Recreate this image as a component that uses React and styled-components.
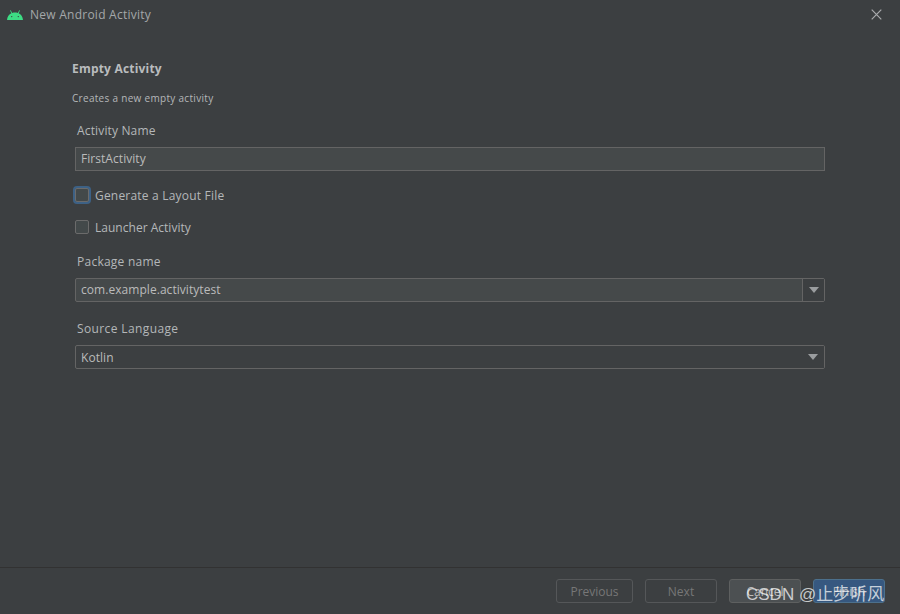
import React from 'react'
import styled, { createGlobalStyle } from 'styled-components'

const Global = createGlobalStyle`
html, body { margin: 0; padding: 0; background: #3c3f41; }
* { box-sizing: border-box; }
`

const Window = styled.div`
position: relative;
width: 900px;
height: 614px;
display: flex;
flex-direction: column;
background: #3c3f41;
color: #bbbbbb;
font-family: "Open Sans", "Noto Sans", "Liberation Sans", sans-serif;
font-size: 12px;
overflow: hidden;
`

const TitleBar = styled.div`
height: 29px;
flex: none;
display: flex;
align-items: center;
padding: 0 18px 0 7px;
gap: 7px;
`

const TitleText = styled.span`
flex: 1;
color: #a4a7a9;
font-size: 12px;
letter-spacing: .25px;
`

const Content = styled.div`
flex: 1;
display: flex;
flex-direction: column;
padding: 31px 75px 0 75px;
`

const Heading = styled.div`
margin-left: -3px;
height: 18px;
line-height: 18px;
font-weight: 700;
font-size: 12px;
letter-spacing: .2px;
color: #b9bcbe;
`

const Description = styled.div`
margin: 12px 0 0 -3px;
height: 16px;
line-height: 16px;
font-size: 10px;
letter-spacing: .3px;
color: #b4b7b9;
`

const Label = styled.div`
margin: ${p => p.$top}px 0 0 2px;
height: 18px;
line-height: 18px;
letter-spacing: ${p => p.$spacing || 0.2}px;
color: #b4b7b9;
`

const Field = styled.div`
margin-top: 7px;
height: 24px;
display: flex;
align-items: stretch;
border: 1px solid #646464;
border-radius: ${p => (p.$square ? 0 : 2)}px;
background: ${p => p.$bg || '#45494a'};
`

const FieldText = styled.div`
flex: 1;
padding-left: 5px;
line-height: ${p => p.$line || 21}px;
letter-spacing: .05px;
color: #bbbbbb;
`

const Arrow = styled.div`
width: 22px;
flex: none;
display: flex;
align-items: center;
justify-content: center;
background: #3c3f41;
border-left: ${p => (p.$divided ? '1px solid #646464' : 'none')};
`

const Triangle = styled.span`
width: 0;
height: 0;
border-left: 5px solid transparent;
border-right: 5px solid transparent;
border-top: 6px solid #9a9d9f;
`

const CheckRow = styled.div`
margin-top: ${p => p.$top}px;
height: 16px;
display: flex;
align-items: center;
gap: 6px;
letter-spacing: ${p => p.$spacing}px;
color: #b4b7b9;
`

const Check = styled.span`
width: 14px;
height: 14px;
flex: none;
border: 1px solid #6b6b6b;
border-radius: 2px;
background: #43494a;
box-shadow: ${p => (p.$focus ? '0 0 0 2px #3d6185' : 'none')};
`

const Footer = styled.div`
height: 47px;
flex: none;
display: flex;
justify-content: flex-end;
align-items: flex-start;
gap: 12px;
padding: 11px 15px 0 0;
border-top: 1px solid #323232;
`

const Button = styled.div`
width: ${p => p.$width}px;
height: 24px;
line-height: 23px;
text-align: center;
border: 1px solid ${p => (p.$primary ? '#4c708c' : p.$active ? '#5e6060' : '#555759')};
border-radius: 3px;
background: ${p => (p.$primary ? '#365880' : p.$active ? '#4c5052' : 'transparent')};
color: ${p => (p.$primary ? '#bbbbbb' : p.$active ? '#bbbbbb' : '#777777')};
`

const Watermark = styled.div`
position: absolute;
left: 746px;
top: 584px;
font-family: "Liberation Sans", "Noto Sans CJK SC", sans-serif;
font-size: 17px;
line-height: 22px;
white-space: nowrap;
color: rgba(255, 255, 255, 0.72);
`

const AndroidIcon = () => (
  <svg width="16" height="10" viewBox="0 0 16 10">
    <path fill="#3ddc84" d="M0 10C.2 6.8 2 4.3 4.4 3.2L3 .6l.7-.4 1.5 2.7c1.8-.6 3.8-.6 5.6 0L12.3.2l.7.4-1.4 2.6c2.4 1.1 4.2 3.6 4.4 6.8z" />
    <circle cx="4.7" cy="6.6" r=".7" fill="#3c3f41" />
    <circle cx="11.3" cy="6.6" r=".7" fill="#3c3f41" />
  </svg>
)

const CloseIcon = () => (
  <svg width="11" height="11" viewBox="0 0 11 11">
    <path stroke="#a9abad" strokeWidth="1.2" d="M.7.7l9.6 9.6M10.3.7L.7 10.3" />
  </svg>
)

export default function App() {
  return (
    <Window>
      <Global />
      <TitleBar>
        <AndroidIcon />
        <TitleText>New Android Activity</TitleText>
        <CloseIcon />
      </TitleBar>
      <Content>
        <Heading>Empty Activity</Heading>
        <Description>Creates a new empty activity</Description>
        <Label $top={16} $spacing={0.15}>Activity Name</Label>
        <Field $square>
          <FieldText>FirstActivity</FieldText>
        </Field>
        <CheckRow $top={16} $spacing={0.2}>
          <Check $focus />
          Generate a Layout File
        </CheckRow>
        <CheckRow $top={16} $spacing={0.02}>
          <Check />
          Launcher Activity
        </CheckRow>
        <Label $top={18} $spacing={0.25}>Package name</Label>
        <Field>
          <FieldText>com.example.activitytest</FieldText>
          <Arrow $divided>
            <Triangle />
          </Arrow>
        </Field>
        <Label $top={18} $spacing={0.38}>Source Language</Label>
        <Field $bg="#3c3f41">
          <FieldText $line={23}>Kotlin</FieldText>
          <Arrow>
            <Triangle />
          </Arrow>
        </Field>
      </Content>
      <Footer>
        <Button $width={77}>Previous</Button>
        <Button $width={72}>Next</Button>
        <Button $width={72} $active>Cancel</Button>
        <Button $width={72} $primary>Finish</Button>
      </Footer>
      <Watermark>CSDN @止步听风</Watermark>
    </Window>
  )
}
